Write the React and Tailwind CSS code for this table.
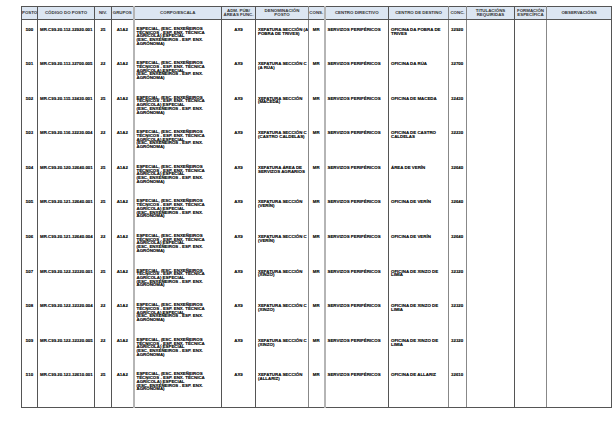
import React from "react";

const CORPO = [
  "ESPECIAL, (ESC. ENXEÑEIROS",
  "TÉCNICOS - ESP. ENX. TÉCNICA",
  "AGRÍCOLA) ESPECIAL",
  "(ESC. ENXEÑEIROS - ESP. ENX.",
  "AGRÓNOMA)",
];

const rows = [
  ["500", "MR.C99.20.112.32920.001", "25", ["XEFATURA SECCIÓN (A", "POBRA DE TRIVES)"], ["OFICINA DA POBRA DE", "TRIVES"], "32920"],
  ["501", "MR.C99.20.113.32700.005", "22", ["XEFATURA SECCIÓN C", "(A RÚA)"], ["OFICINA DA RÚA"], "32700"],
  ["502", "MR.C99.20.115.32430.001", "25", ["XEFATURA SECCIÓN", "(MACEDA)"], ["OFICINA DE MACEDA"], "32430"],
  ["503", "MR.C99.20.116.32230.004", "22", ["XEFATURA SECCIÓN C", "(CASTRO CALDELAS)"], ["OFICINA DE CASTRO", "CALDELAS"], "32230"],
  ["504", "MR.C99.20.120.32640.001", "25", ["XEFATURA ÁREA DE", "SERVIZOS AGRARIOS"], ["ÁREA DE VERÍN"], "32640"],
  ["505", "MR.C99.20.121.32640.001", "25", ["XEFATURA SECCIÓN", "(VERÍN)"], ["OFICINA DE VERÍN"], "32640"],
  ["506", "MR.C99.20.121.32640.004", "22", ["XEFATURA SECCIÓN C", "(VERÍN)"], ["OFICINA DE VERÍN"], "32640"],
  ["507", "MR.C99.20.122.32320.001", "25", ["XEFATURA SECCIÓN", "(XINZO)"], ["OFICINA DE XINZO DE", "LIMIA"], "32320"],
  ["508", "MR.C99.20.122.32320.004", "22", ["XEFATURA SECCIÓN C", "(XINZO)"], ["OFICINA DE XINZO DE", "LIMIA"], "32320"],
  ["509", "MR.C99.20.122.32320.005", "22", ["XEFATURA SECCIÓN C", "(XINZO)"], ["OFICINA DE XINZO DE", "LIMIA"], "32320"],
  ["510", "MR.C99.20.123.32610.001", "25", ["XEFATURA SECCIÓN", "(ALLARIZ)"], ["OFICINA DE ALLARIZ"], "32610"],
];

const widths = [16, 57, 17, 22, 88, 34, 53, 16, 64, 60, 18, 48, 32, 65];

const dark = "border-r border-r-[#555555]";
const light = "border-r-2 border-r-[#b5b5b5]";
const mid = "border-r border-r-[#888888]";
const rb = [dark, dark, dark, light, dark, dark, mid, light, dark, mid, mid, dark, mid, dark];

const headers = [
  ["POSTO"],
  ["CÓDIGO DO POSTO"],
  ["NIV."],
  ["GRUPOS"],
  ["CORPO/ESCALA"],
  ["ADM. PÚB/", "ÁREAS FUNC."],
  ["DENOMINACIÓN", "POSTO"],
  ["CONS."],
  ["CENTRO DIRECTIVO"],
  ["CENTRO DE DESTINO"],
  ["CONC."],
  ["TITULACIÓNS", "REQUIRIDAS"],
  ["FORMACIÓN", "ESPECÍFICA"],
  ["OBSERVACIÓNS"],
];

function Lines({ lines }) {
  return lines.map((l, i) => (
    <div key={i} className="whitespace-nowrap">
      {l}
    </div>
  ));
}

export default function App() {
  return (
    <div
      className="w-[615px] h-[439px] bg-white overflow-hidden pt-[6px] pl-[21px] text-black"
      style={{ fontFamily: '"Liberation Sans", Arial, sans-serif' }}
    >
      <table className="table-fixed border-collapse w-[590px] text-[4.4px] leading-[3.7px] font-bold [-webkit-text-stroke:0.12px_black]">
        <colgroup>
          {widths.map((w, i) => (
            <col key={i} style={{ width: w }} />
          ))}
        </colgroup>
        <thead>
          <tr className="h-[13px] bg-[#dce6f2]">
            {headers.map((h, i) => (
              <th
                key={i}
                className={`${rb[i]} ${i === 0 ? "border-l border-l-[#555555]" : ""} border-t border-t-[#555555] border-b border-b-[#555555] text-center align-middle font-bold text-[#333333] [-webkit-text-stroke:0px] p-0 overflow-hidden`}
              >
                <Lines lines={h} />
              </th>
            ))}
          </tr>
        </thead>
        <tbody>
          {rows.map((r, ri) => {
            const last = ri === rows.length - 1;
            const cells = [
              { c: r[0], a: "text-center pt-[8px]" },
              { c: r[1], a: "text-left pl-[2px] pt-[8px]" },
              { c: r[2], a: "text-center pt-[8px]" },
              { c: "A1A2", a: "text-center pt-[8px]" },
              { c: <Lines lines={CORPO} />, a: "text-left pl-[2px] pt-[7px]" },
              { c: "AX9", a: "text-center pt-[8px]" },
              { c: <Lines lines={r[3]} />, a: "text-left pl-[2px] pt-[8px]" },
              { c: "MR", a: "text-center pt-[8px]" },
              { c: "SERVIZOS PERIFÉRICOS", a: "text-left pl-[2px] pt-[8px]" },
              { c: <Lines lines={r[4]} />, a: "text-left pl-[2px] pt-[8px]" },
              { c: r[5], a: "text-left pl-[2px] pt-[8px]" },
              { c: "", a: "" },
              { c: "", a: "" },
              { c: "", a: "" },
            ];
            return (
              <tr key={ri} className={last ? "h-[41.6px]" : "h-[34.6px]"}>
                {cells.map((cell, ci) => (
                  <td
                    key={ci}
                    className={`${rb[ci]} ${ci === 0 ? "border-l border-l-[#555555]" : ""} ${last ? "border-b border-b-[#555555]" : ""} align-top whitespace-nowrap overflow-hidden ${cell.a}`}
                  >
                    {cell.c}
                  </td>
                ))}
              </tr>
            );
          })}
        </tbody>
      </table>
    </div>
  );
}
